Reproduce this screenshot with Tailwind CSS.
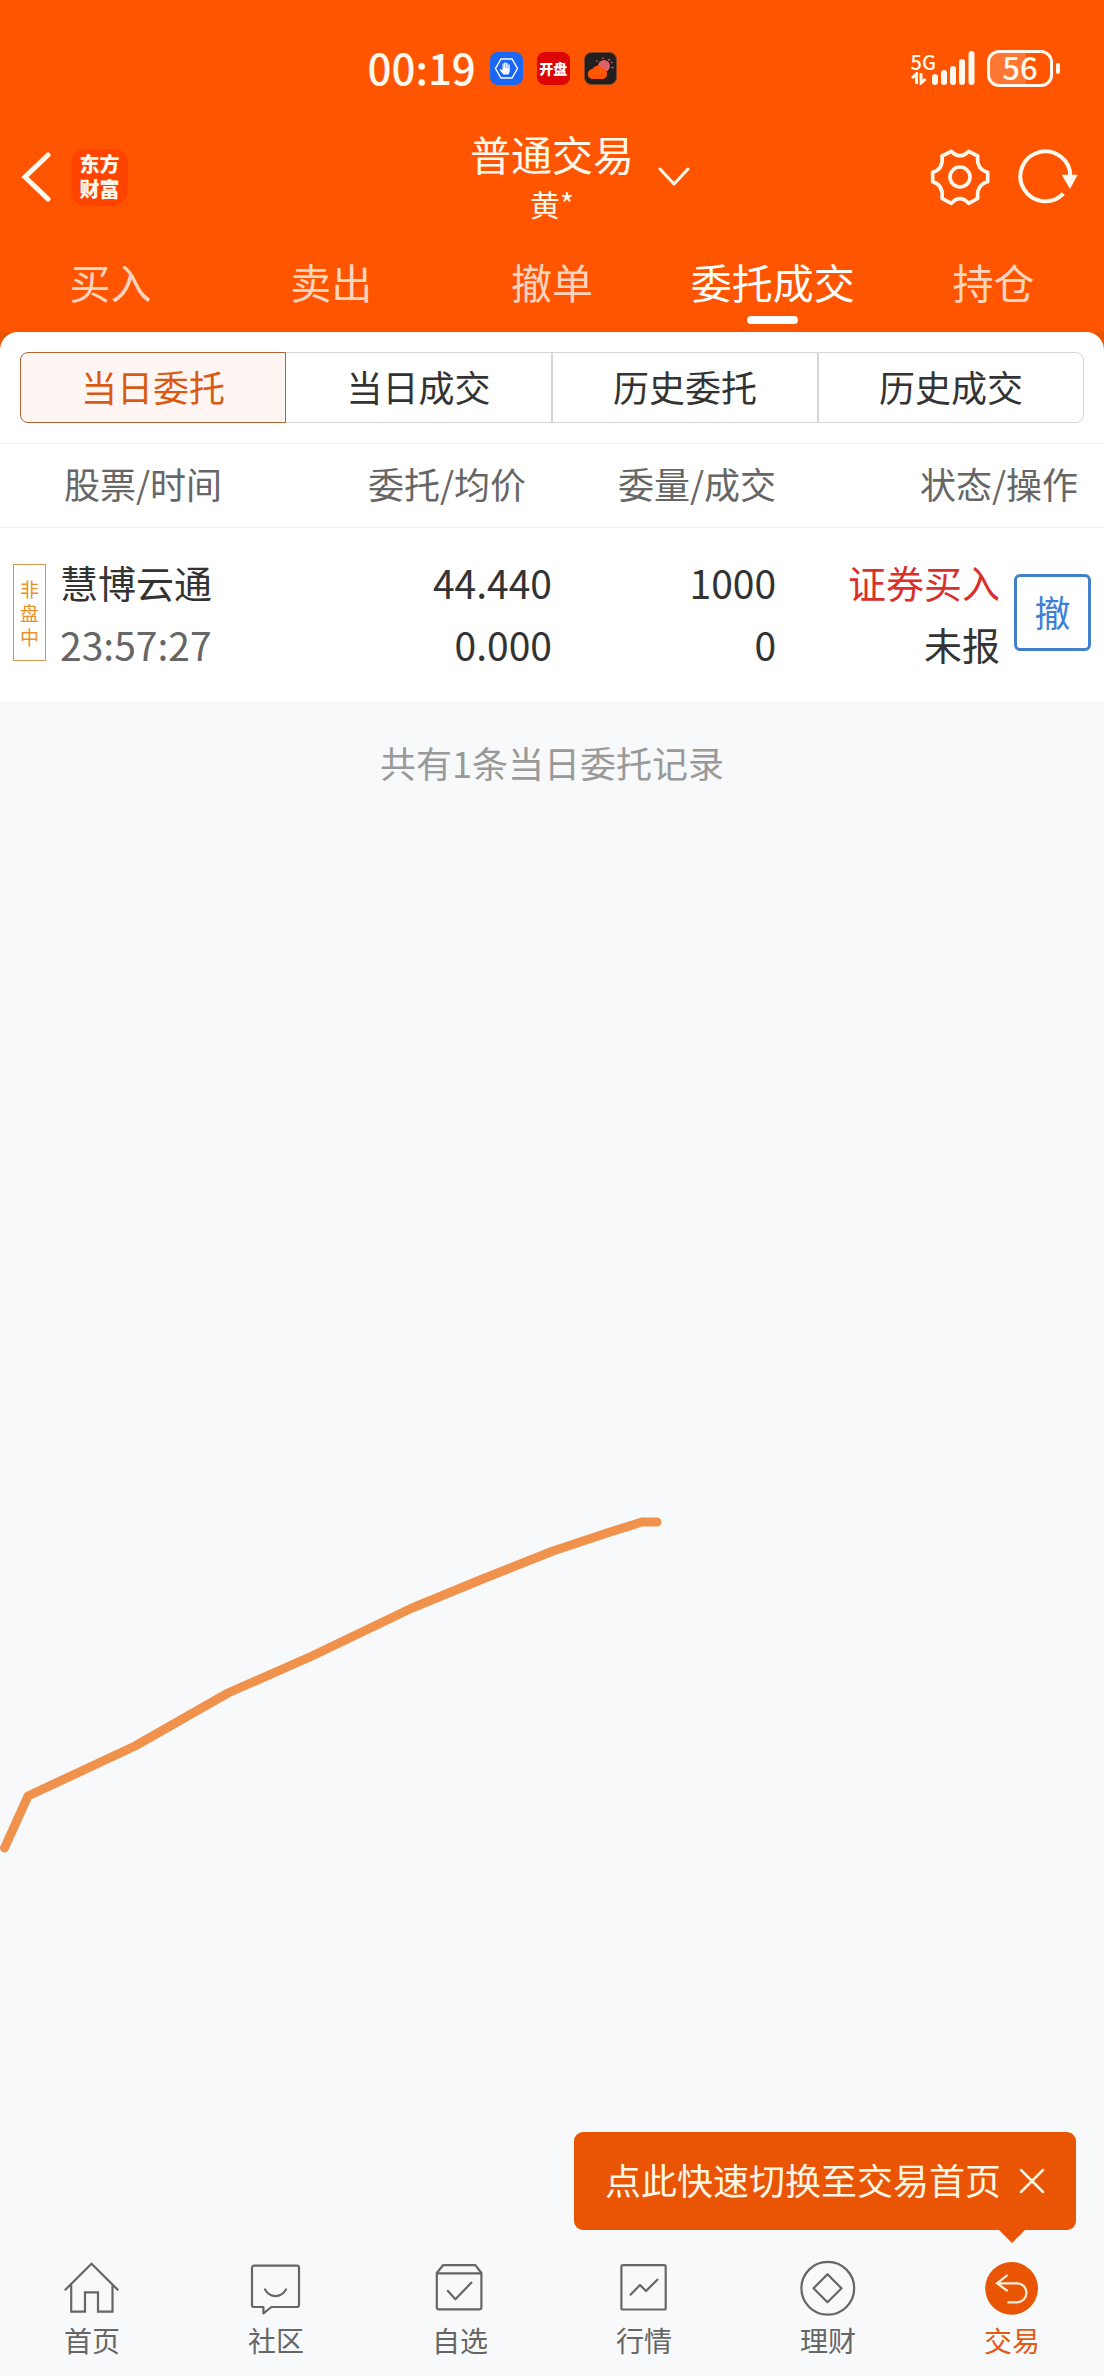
<!DOCTYPE html>
<html lang="zh-CN">
<head>
<meta charset="utf-8">
<meta name="viewport" content="width=device-width, initial-scale=1">
<title>普通交易</title>
<script src="https://cdn.jsdelivr.net/npm/@tailwindcss/browser@4"></script>
</head>
<body class="flex min-h-screen flex-col bg-[#f7f9fb] font-['Noto_Sans_CJK_SC','Noto_Sans',sans-serif] text-[#333333]">

<header class="bg-[#ff5500] text-[#fff8ec]">
  <!-- Status bar -->
  <div class="grid h-[120px] grid-cols-[43fr_auto_57fr] items-center pt-4">
    <div></div>
    <div class="flex items-center gap-[14px]">
      <span class="pb-[3px] text-[42px] leading-[48px] font-medium">00:19</span>
      <svg class="size-[33px]" viewBox="0 0 33 33" aria-hidden="true">
        <rect width="33" height="33" rx="8" fill="#1a66f5"/>
        <path d="M11 7h11l5.500 9.500L22 26H11L5.500 16.500Z" fill="none" stroke="#fff" stroke-width="1.400"/>
        <path d="M12.500 11.500v7l-1.800-1.600-1 1 3.800 4.600h5l1.200-3v-7h-1.400v4h-.6V11h-1.500v5h-.6v-5.500h-1.500V16h-.4v-4.500Z" fill="#fff"/>
      </svg>
      <span class="flex size-[33px] items-center justify-center rounded-lg bg-[#dd0505] text-[14px] leading-none font-black text-white">开盘</span>
      <svg class="size-[33px]" viewBox="0 0 33 33" aria-hidden="true">
        <rect x=".5" y=".5" width="32" height="32" rx="7" fill="#241f1c" stroke="#80452a"/>
        <circle cx="20" cy="14" r="6" fill="#e0606a"/>
        <path d="M19 5.500V7M12.500 8.500l1 1M25.500 7l-1 1.500M28.500 10l-1.500 1M27.500 15.500h2" stroke="#e0606a" stroke-width="1.400"/>
        <path d="M9 27a5 5 0 0 1-.5-10 6 6 0 0 1 10.500-.5A5.500 5.500 0 0 1 19.500 27Z" fill="#ff5500"/>
      </svg>
    </div>
    <div class="flex items-center justify-end pr-11">
      <div class="mr-[-4px] flex flex-col">
        <span class="text-[20px] leading-[20px] font-medium">5G</span>
        <svg class="h-[13px] w-4" viewBox="0 0 16 13" aria-hidden="true"><path d="M5.500 12V2L1 6M10 1v10l4.500-4" fill="none" stroke="currentColor" stroke-width="3"/></svg>
      </div>
      <svg class="h-[34px] w-[44px]" viewBox="0 0 44 34" fill="currentColor" aria-hidden="true">
        <rect x="0" y="23" width="6" height="11" rx="3"/><rect x="9" y="19" width="6" height="15" rx="3"/><rect x="18" y="15" width="6" height="19" rx="3"/><rect x="27" y="8" width="6" height="26" rx="3"/><rect x="36.500" y="0" width="6" height="34" rx="3"/>
      </svg>
      <span class="ml-[11px] flex h-[37px] w-[66px] items-center justify-center rounded-[12px] border-3 border-current bg-linear-to-r from-white/20 from-60% to-transparent to-60% pb-[3px] text-[31px] leading-none font-medium">56</span>
      <span class="ml-[3px] h-[11px] w-1 rounded-full bg-current"></span>
    </div>
  </div>

  <!-- Title bar -->
  <div class="grid h-[114px] grid-cols-[1fr_auto_1fr] items-center">
    <div class="flex items-center gap-5 pl-[21px]">
      <button type="button" aria-label="返回">
        <svg class="h-[52px] w-[30px]" viewBox="0 0 30 52" fill="none" stroke="currentColor" stroke-width="5" stroke-linecap="round" aria-hidden="true"><path d="M27 4 4 26l23 22"/></svg>
      </button>
      <span class="flex size-[57px] flex-col items-center justify-center rounded-[14px] bg-[#ff4400] pb-[3px] text-[20px] leading-[25px] font-black"><span>东方</span><span>财富</span></span>
    </div>
    <button type="button" class="relative flex flex-col items-center pb-[3px]">
      <span class="text-[41px] leading-[54px]">普通交易</span>
      <span class="text-[30px] leading-[46px]">黄*</span>
      <svg class="absolute top-1/2 left-full ml-6 h-5 w-8 -translate-y-1/2" viewBox="0 0 32 20" fill="none" stroke="currentColor" stroke-width="3" stroke-linecap="round" stroke-linejoin="round" aria-hidden="true"><path d="m2 2 14 15L30 2"/></svg>
    </button>
    <div class="flex items-center justify-end gap-7 pr-[26px]">
      <button type="button" aria-label="设置">
        <svg class="h-[58px] w-[60px]" viewBox="90 52 178 174" fill="none" stroke="currentColor" stroke-width="11" stroke-linejoin="round" aria-hidden="true"><path d="M153 62Q179 88 205 62L232 76Q228 116 262 125V153Q228 162 232 203L205 218Q179 190 153 218L125 203Q130 162 97 153V125Q130 116 125 76Z"/><circle cx="179" cy="139" r="30"/></svg>
      </button>
      <button type="button" aria-label="刷新">
        <svg class="h-[56px] w-[60px]" viewBox="354 58 180 168" aria-hidden="true"><path d="M511 142A75 75 0 1 0 490 192" fill="none" stroke="currentColor" stroke-width="12"/><path d="M485 135h48l-23 43Z" fill="currentColor"/></svg>
      </button>
    </div>
  </div>

  <!-- Trade tabs -->
  <nav class="grid h-[98px] grid-cols-5 text-[41px] leading-[64px] text-white/75">
    <button type="button" class="flex flex-col items-center pt-[15px]">买入</button>
    <button type="button" class="flex flex-col items-center pt-[15px]">卖出</button>
    <button type="button" class="flex flex-col items-center pt-[15px]">撤单</button>
    <button type="button" class="flex flex-col items-center gap-[3px] pt-[15px] text-white" aria-current="page">委托成交<span class="h-2 w-[51px] rounded-full bg-white"></span></button>
    <button type="button" class="flex flex-col items-center pt-[15px]">持仓</button>
  </nav>
</header>

<main class="flex grow flex-col">
  <div class="bg-[#e85500]">
    <section class="rounded-t-[18px] bg-white">
      <div class="px-5 py-5">
        <div class="grid h-[71px] grid-cols-4 text-[36px] leading-[50px]">
          <button type="button" class="rounded-l-lg border border-[#b5622f] bg-[#fff6f3] pb-[3px] text-[#d95b13]">当日委托</button>
          <button type="button" class="border border-l-0 border-[#d2d4d5] pb-[3px]">当日成交</button>
          <button type="button" class="border border-[#d2d4d5] pb-[3px]">历史委托</button>
          <button type="button" class="rounded-r-lg border border-[#d2d4d5] pb-[3px]">历史成交</button>
        </div>
      </div>

      <table class="w-full table-fixed">
        <thead>
          <tr class="h-[84px] border-y border-y-[#f0f0f0] text-[36px] leading-[50px] text-[#666666]">
            <th class="w-1/4 pb-[5px] pl-16 text-left font-normal">股票/时间</th>
            <th class="w-1/4 pr-[26px] pb-[5px] text-right font-normal">委托/均价</th>
            <th class="w-[20.3%] pb-[5px] text-right font-normal">委量/成交</th>
            <th class="pr-[26px] pb-[5px] text-right font-normal">状态/操作</th>
          </tr>
        </thead>
        <tbody>
          <tr class="h-[173px] text-[38px] leading-[62px]">
            <td class="pb-[3px]">
              <div class="flex items-center gap-[14px] pl-[13px]">
                <span class="flex h-[97px] w-[33px] shrink-0 flex-col items-center justify-center border border-[#d09a4a] text-[19px] leading-[24px] text-[#e8922a]"><span>非</span><span>盘</span><span>中</span></span>
                <div class="whitespace-nowrap"><p>慧博云通</p><p class="text-[39px] text-[#666666]">23:57:27</p></div>
              </div>
            </td>
            <td class="pb-[3px] text-right text-[39px]"><p>44.440</p><p>0.000</p></td>
            <td class="pb-[3px] text-right text-[39px]"><p>1000</p><p>0</p></td>
            <td class="pb-[3px]">
              <div class="flex items-center justify-end gap-[14px] pr-[13px]">
                <div class="text-right"><p class="text-[#d9302c]">证券买入</p><p>未报</p></div>
                <button type="button" class="size-[77px] rounded-md border-3 border-[#4380cb] pb-[3px] text-[36px] leading-[50px] text-[#3d7fd6]">撤</button>
              </div>
            </td>
          </tr>
        </tbody>
      </table>
    </section>
  </div>

  <p class="pt-[36px] pb-[38px] text-center text-[36px] leading-[50px] text-[#999999]">共有1条当日委托记录</p>

  <!-- Freehand stroke -->
  <svg class="mt-[685px] h-[350px] w-[664px]" viewBox="0 1510 664 350" fill="none" stroke="#f0924c" stroke-width="9" stroke-linecap="round" stroke-linejoin="round" aria-hidden="true"><path d="M4.500 1848 28 1796 135 1746 228 1693 312 1656 412 1608 485 1578 553 1551 607 1533 642 1522 657 1522"/></svg>
</main>

<nav class="relative grid h-[132px] grid-cols-6 bg-[#f8f9fb] text-[28px] leading-[40px] text-[#666666]">
  <a href="#" class="flex flex-col items-center gap-1 pt-4">
    <svg class="size-14" viewBox="0 0 56 56" fill="none" stroke="currentColor" stroke-width="2.200" aria-hidden="true"><path d="M.8 30.300 27.500 3.800 54.300 30.300M7.200 24v27.700H21V32.300h13v19.400h14.500V24"/></svg>首页</a>
  <a href="#" class="flex flex-col items-center gap-1 pt-4">
    <svg class="size-14" viewBox="0 0 56 56" fill="none" stroke="currentColor" stroke-width="2.200" stroke-linejoin="round" stroke-linecap="round" aria-hidden="true"><path d="M6 5.700h43a2 2 0 0 1 2 2V45a2 2 0 0 1-2 2H23.400l-8 6.300V47H6a2 2 0 0 1-2-2V7.700a2 2 0 0 1 2-2ZM17 29.500c5 8.700 16 8.700 21 0"/></svg>社区</a>
  <a href="#" class="flex flex-col items-center gap-1 pt-4">
    <svg class="size-14" viewBox="0 0 56 56" fill="none" stroke="currentColor" stroke-width="2.200" stroke-linejoin="round" aria-hidden="true"><path d="M4.800 13 11 5.200h32.400l6 7.800v34.300a2 2 0 0 1-2 2H6.800a2 2 0 0 1-2-2ZM4.800 13.300h44.600M15.200 30.300l8.200 9L40 22"/></svg>自选</a>
  <a href="#" class="flex flex-col items-center gap-1 pt-4">
    <svg class="size-14" viewBox="0 0 56 56" fill="none" stroke="currentColor" stroke-width="2.200" stroke-linejoin="round" aria-hidden="true"><rect x="5.400" y="5.200" width="44.300" height="44.300" rx="1.500"/><path d="m14 35.300 10-10.300 6 6 12-12"/></svg>行情</a>
  <a href="#" class="flex flex-col items-center gap-1 pt-4">
    <svg class="size-14" viewBox="0 0 56 56" fill="none" stroke="currentColor" stroke-width="2.200" stroke-linejoin="round" aria-hidden="true"><circle cx="27.800" cy="28.300" r="26.400"/><path d="m27.500 14.300 14 14-14 14-14-14Z"/></svg>理财</a>
  <a href="#" class="flex flex-col items-center gap-1 pt-4 text-[#e05a14]" aria-current="page">
    <svg class="size-14" viewBox="0 0 56 56" fill="none" stroke="#fff0dc" stroke-width="2.200" aria-hidden="true"><circle cx="27.600" cy="28.300" r="26.400" fill="#e95504" stroke="none"/><path d="m23.600 15-10.600 8.300L23.600 31M13 23.300h20a9.500 9.500 0 0 1 0 19h-9.500"/></svg>交易</a>

  <!-- Hint bubble above the trade tab -->
  <div class="absolute right-7 bottom-full mb-[14px] flex h-[98px] items-center gap-[18px] rounded-[9px] bg-[#e95504] px-[31px] text-[36px] leading-[50px] whitespace-nowrap text-[#fff6e6]">
    <span class="pb-[5px]">点此快速切换至交易首页</span>
    <button type="button" aria-label="关闭"><svg class="size-[26px]" viewBox="0 0 26 26" fill="none" stroke="currentColor" stroke-width="2.500" stroke-linecap="round" aria-hidden="true"><path d="m2 2 22 22M24 2 2 24"/></svg></button>
    <svg class="absolute top-full right-[51px] h-[13px] w-[26px]" viewBox="0 0 26 13" fill="#e95504" aria-hidden="true"><path d="M0 0h26L13 13Z"/></svg>
  </div>
</nav>
</body>
</html>
